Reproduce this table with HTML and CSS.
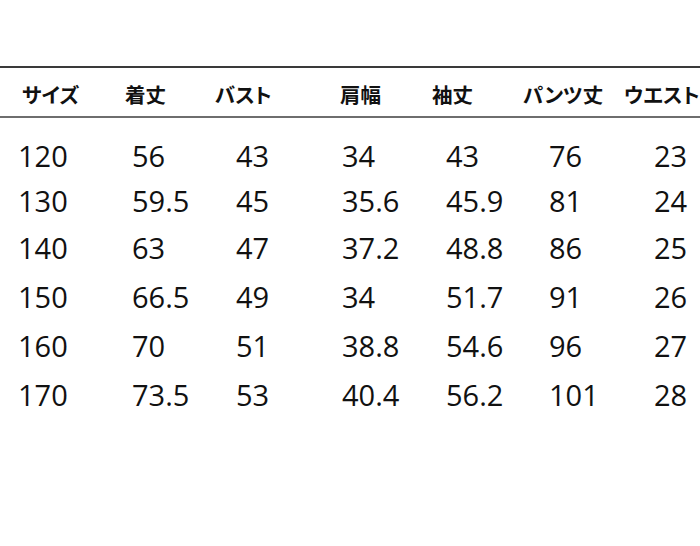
FILE: index.html
```html
<!DOCTYPE html>
<html lang="ja">
<head>
<meta charset="utf-8">
<link rel="stylesheet" href="styles.css">
</head>
<body>
<div class="sheet">
  <div class="head">
    <div class="h">サイズ</div>
    <div class="h">着丈</div>
    <div class="h">バスト</div>
    <div class="h">肩幅</div>
    <div class="h">袖丈</div>
    <div class="h">パンツ丈</div>
    <div class="h">ウエスト</div>
  </div>
  <div class="body">
    <div class="row r1"><span>120</span><span>56</span><span>43</span><span>34</span><span>43</span><span>76</span><span>23</span></div>
    <div class="row r2"><span>130</span><span>59.5</span><span>45</span><span>35.6</span><span>45.9</span><span>81</span><span>24</span></div>
    <div class="row r3"><span>140</span><span>63</span><span>47</span><span>37.2</span><span>48.8</span><span>86</span><span>25</span></div>
    <div class="row r4"><span>150</span><span>66.5</span><span>49</span><span>34</span><span>51.7</span><span>91</span><span>26</span></div>
    <div class="row r5"><span>160</span><span>70</span><span>51</span><span>38.8</span><span>54.6</span><span>96</span><span>27</span></div>
    <div class="row r6"><span>170</span><span>73.5</span><span>53</span><span>40.4</span><span>56.2</span><span>101</span><span>28</span></div>
  </div>
</div>
</body>
</html>
```
FILE: styles.css
```css
html, body {
  margin: 0;
  padding: 0;
  background: #fff;
}
.sheet {
  width: 700px;
  height: 546px;
  padding-top: 66px;
  box-sizing: border-box;
  color: #111;
}
.head {
  display: grid;
  grid-template-columns: 103px 90px 125px 92px 91px 101px 76px;
  padding: 4px 0 0 22px;
  height: 44px;
  box-sizing: content-box;
  align-items: center;
  border-top: 2px solid #3a3a3a;
  border-bottom: 2px solid #6e6e6e;
  font-family: "Noto Sans CJK JP", sans-serif;
  font-weight: 700;
  font-size: 20.5px;
  font-feature-settings: "palt";
  white-space: nowrap;
}
.h {
  line-height: 1;
}
.body {
  padding-top: 14px;
  font-family: "Open Sans", "Noto Sans", sans-serif;
  font-size: 29px;
}
.row {
  display: grid;
  grid-template-columns: 114px 104px 106px 104px 103px 105px 45px;
  padding-left: 18px;
  align-items: center;
  line-height: 1;
}
.r1 { height: 46px; }
.r2 { height: 45px; }
.r3 { height: 48px; }
.r4 { height: 50px; }
.r5 { height: 49px; }
.r6 { height: 48px; }
```
